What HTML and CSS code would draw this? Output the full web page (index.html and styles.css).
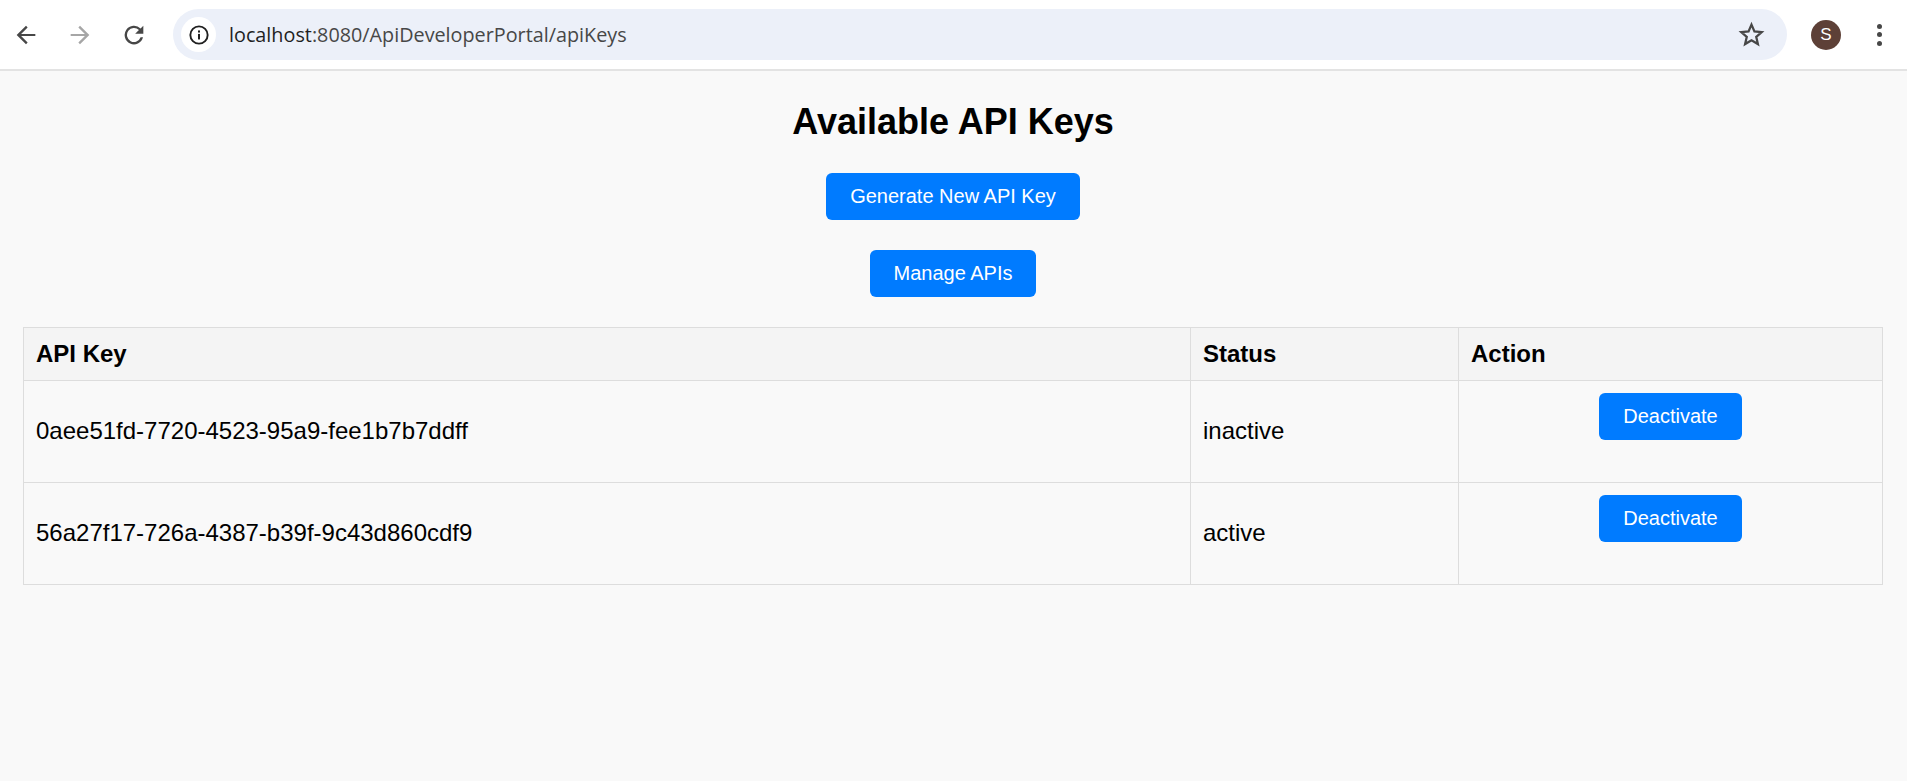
FILE: index.html
```html
<!DOCTYPE html>
<html lang="en">
<head>
    <meta charset="UTF-8">
    <meta name="viewport" content="width=device-width, initial-scale=1.0">
    <title>API Keys</title>
    <link rel="stylesheet" href="styles.css">
</head>
<body>
    <!-- Browser toolbar -->
    <div class="toolbar">
        <div class="nav-icons">
            <svg class="nav-icon" viewBox="0 0 24 24"><path d="M20 11.1H7.8l5.6-5.6L12 4l-8 8 8 8 1.4-1.5-5.6-5.6H20z" fill="#474747"/></svg>
            <svg class="nav-icon" viewBox="0 0 24 24"><path d="M4 11.1h12.2l-5.6-5.6L12 4l8 8-8 8-1.4-1.5 5.6-5.6H4z" fill="#a6a6a6"/></svg>
            <svg class="nav-icon" viewBox="0 0 24 24"><path d="M17.65 6.35A8 8 0 1 0 19.73 14h-2.08a6 6 0 1 1-1.41-6.24L13 11h7V4z" fill="#474747"/></svg>
        </div>
        <div class="address-bar">
            <span class="site-info">
                <svg class="info-icon" viewBox="0 0 18 18">
                    <circle cx="9" cy="9" r="7.8" fill="none" stroke="#1f1f1f" stroke-width="1.7"/>
                    <rect x="8.1" y="8" width="1.8" height="5" fill="#1f1f1f"/>
                    <rect x="8.1" y="4.9" width="1.8" height="1.9" fill="#1f1f1f"/>
                </svg>
            </span>
            <span class="url"><span class="url-host">localhost</span>:8080/ApiDeveloperPortal/apiKeys</span>
            <svg class="star-icon" viewBox="0 0 24 24"><path d="M12 3.2l2.6 6 6.5.6-4.9 4.3 1.5 6.4-5.7-3.4-5.7 3.4 1.5-6.4-4.9-4.3 6.5-.6z" fill="none" stroke="#474747" stroke-width="2" stroke-linejoin="miter"/></svg>
        </div>
        <div class="avatar">S</div>
        <div class="menu-dots">
            <span></span>
            <span></span>
            <span></span>
        </div>
    </div>

    <div class="container">
        <h1>Available API Keys</h1>
        <a class="btn btn-center" href="#">Generate New API Key</a>
        <a class="btn btn-center" href="#">Manage APIs</a>

        <table>
            <thead>
                <tr>
                    <th class="col-key">API Key</th>
                    <th class="col-status">Status</th>
                    <th>Action</th>
                </tr>
            </thead>
            <tbody>
                <tr>
                    <td class="cell-text">0aee51fd-7720-4523-95a9-fee1b7b7ddff</td>
                    <td class="cell-text">inactive</td>
                    <td><button class="btn btn-center">Deactivate</button></td>
                </tr>
                <tr>
                    <td class="cell-text">56a27f17-726a-4387-b39f-9c43d860cdf9</td>
                    <td class="cell-text">active</td>
                    <td><button class="btn btn-center">Deactivate</button></td>
                </tr>
            </tbody>
        </table>
    </div>
</body>
</html>
```

FILE: styles.css
```css
* {
    box-sizing: border-box;
}
body {
    font-family: "Liberation Sans", Arial, sans-serif;
    background-color: #f9f9f9;
    color: #000;
    margin: 0;
    padding: 0;
}

/* Toolbar */
.toolbar {
    display: flex;
    align-items: center;
    height: 71px;
    padding: 0;
    background-color: #fff;
    border-bottom: 2px solid #e3e3e3;
}
.nav-icons {
    display: flex;
    gap: 26px;
    margin-left: 12px;
    width: 161px;
}
.nav-icon {
    width: 28px;
    height: 28px;
}
.address-bar {
    display: flex;
    align-items: center;
    width: 1614px;
    height: 51px;
    padding: 0 22px 0 8px;
    background-color: #ecf0f9;
    border-radius: 26px;
}
.site-info {
    display: flex;
    align-items: center;
    justify-content: center;
    width: 35px;
    height: 35px;
    border-radius: 50%;
    background-color: #fff;
}
.info-icon {
    width: 20px;
    height: 20px;
}
.url {
    flex: 1;
    margin-left: 13px;
    font-family: "Open Sans", sans-serif;
    font-size: 19.8px;
    color: #474747;
}
.url-host {
    color: #1f1f1f;
}
.star-icon {
    width: 27px;
    height: 27px;
}
.avatar {
    width: 30px;
    height: 30px;
    margin-left: 24px;
    border-radius: 50%;
    background-color: #5d4037;
    color: #fff;
    font-family: "Liberation Sans", sans-serif;
    font-size: 17px;
    line-height: 30px;
    text-align: center;
}
.menu-dots {
    display: flex;
    flex-direction: column;
    gap: 3.5px;
    margin-left: 36px;
}
.menu-dots span {
    width: 5px;
    height: 5px;
    border-radius: 50%;
    background-color: #474747;
}

/* Page */
.container {
    padding: 0 24px 0 23px;
}
h1 {
    margin: 0;
    padding-top: 30px;
    height: 102px;
    font-size: 36px;
    line-height: 42px;
    text-align: center;
}
.btn {
    display: inline-block;
    padding: 12px 24px;
    background-color: #007bff;
    color: #fff;
    border: none;
    border-radius: 6px;
    font-family: inherit;
    font-size: 20px;
    line-height: 23px;
    text-decoration: none;
    cursor: pointer;
}
.btn-center {
    display: block;
    width: fit-content;
    margin: 0 auto 30px;
}
.btn:hover {
    background-color: #0069d9;
}
table {
    width: 100%;
    border-collapse: collapse;
}
th, td {
    padding: 12px;
    border: 1px solid #ddd;
    font-size: 24px;
    text-align: left;
}
th {
    background-color: #f4f4f4;
}
.cell-text {
    padding-bottom: 14px;
}
.col-key {
    width: 1167px;
}
.col-status {
    width: 268px;
}
```
